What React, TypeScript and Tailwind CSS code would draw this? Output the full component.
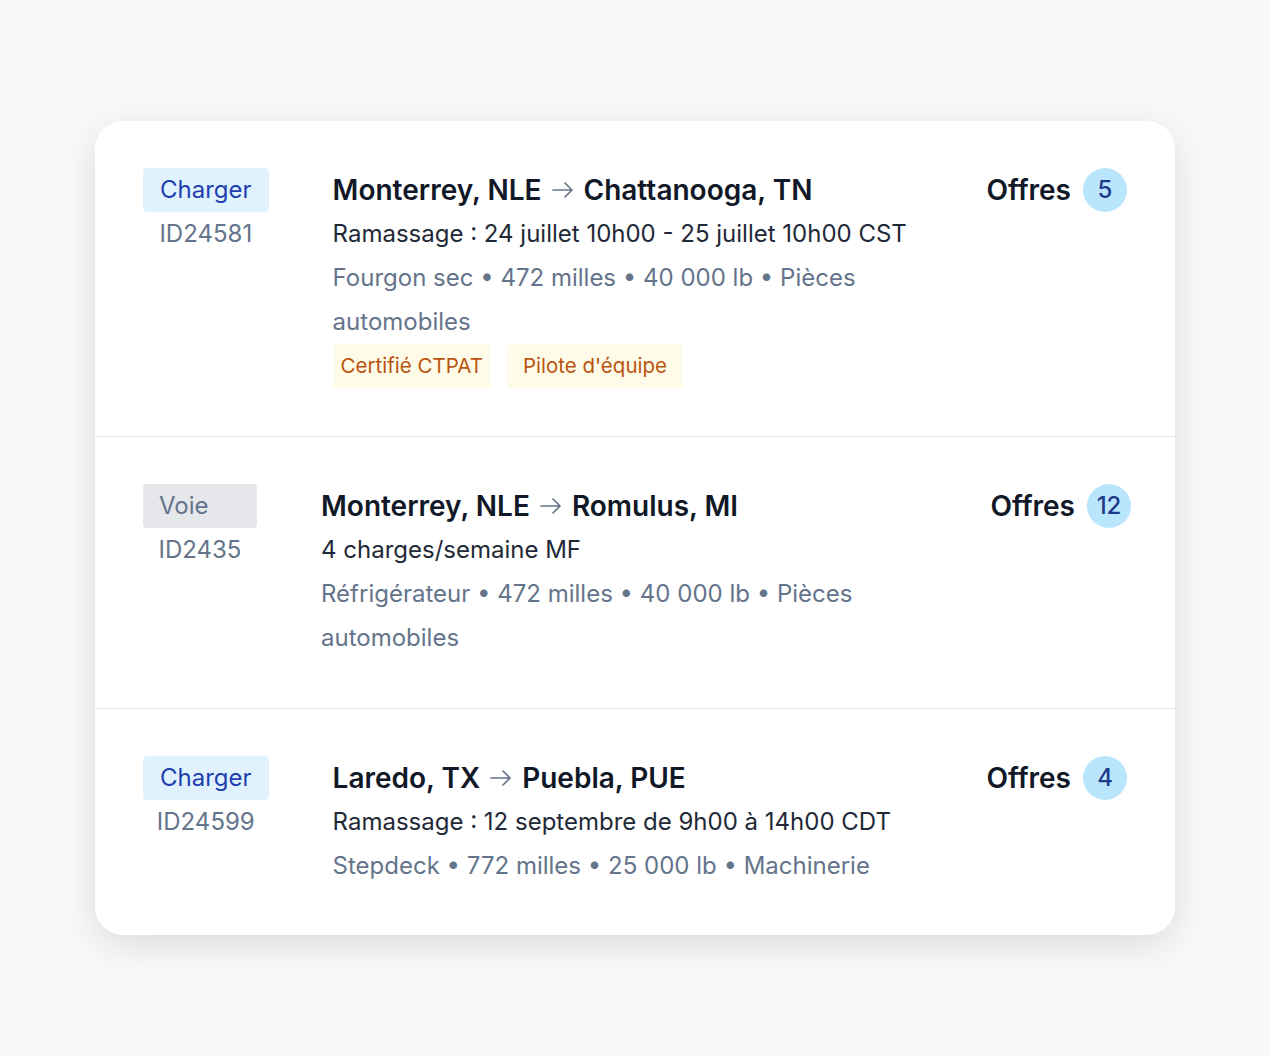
type Tag = { label: string; pad: string };

type Load = {
  kind: "Charger" | "Voie";
  id: string;
  from: string;
  to: string;
  schedule: string;
  meta: string;
  tags?: Tag[];
  offers: number;
  rightPad?: string;
};

const LOADS: Load[] = [
  {
    kind: "Charger",
    id: "ID24581",
    from: "Monterrey, NLE",
    to: "Chattanooga, TN",
    schedule: "Ramassage : 24 juillet 10h00 - 25 juillet 10h00 CST",
    meta: "Fourgon sec • 472 milles • 40 000 lb • Pièces automobiles",
    tags: [
      { label: "Certifié CTPAT", pad: "px-2" },
      { label: "Pilote d'équipe", pad: "px-4" },
    ],
    offers: 5,
  },
  {
    kind: "Voie",
    id: "ID2435",
    from: "Monterrey, NLE",
    to: "Romulus, MI",
    schedule: "4 charges/semaine MF",
    meta: "Réfrigérateur • 472 milles • 40 000 lb • Pièces automobiles",
    offers: 12,
    rightPad: "pr-[44px]",
  },
  {
    kind: "Charger",
    id: "ID24599",
    from: "Laredo, TX",
    to: "Puebla, PUE",
    schedule: "Ramassage : 12 septembre de 9h00 à 14h00 CDT",
    meta: "Stepdeck • 772 milles • 25 000 lb • Machinerie",
    offers: 4,
  },
];

function RouteArrow() {
  return (
    <svg width="22" height="20" viewBox="0 0 22 20" fill="none" className="shrink-0">
      <path
        d="M1 10H20M13 3L20 10L13 17"
        stroke="#64748b"
        strokeWidth="1.7"
        strokeLinecap="round"
        strokeLinejoin="round"
      />
    </svg>
  );
}

function LoadRow({ load, last }: { load: Load; last: boolean }) {
  const isLoad = load.kind === "Charger";
  return (
    <div
      className={`flex items-start pl-12 pt-[47px] ${load.rightPad ?? "pr-12"} ${
        last ? "pb-[47px]" : "border-b border-[#e5e7eb] pb-12"
      }`}
    >
      <div className="flex shrink-0 flex-col items-center">
        <span
          className={`h-11 rounded text-[24px] leading-[44px] ${
            isLoad
              ? "bg-[#e0f2fe] px-[17px] text-[#1e40af]"
              : "w-[114px] bg-[#e5e7eb] px-4 text-[#64748b]"
          }`}
        >
          {load.kind}
        </span>
        <span className="text-[24px] leading-[44px] text-[#64748b]">{load.id}</span>
      </div>

      <div className="ml-16 w-[610px] shrink-0">
        <div className="flex items-center gap-2.5 text-[28px] font-semibold leading-[44px] text-[#111827]">
          <span>{load.from}</span>
          <RouteArrow />
          <span>{load.to}</span>
        </div>
        <p className="text-[24px] leading-[44px] text-[#1f2937]">{load.schedule}</p>
        <p className="text-[24px] leading-[44px] text-[#64748b]">{load.meta}</p>
        {load.tags ? (
          <div className="flex gap-4">
            {load.tags.map((tag) => (
              <span
                key={tag.label}
                className={`h-11 rounded bg-[#fefbe8] text-[20.5px] leading-[44px] text-[#bb540f] ${tag.pad}`}
              >
                {tag.label}
              </span>
            ))}
          </div>
        ) : null}
      </div>

      <div className="ml-auto flex items-center gap-3">
        <span className="text-[28px] font-semibold leading-[44px] text-[#111827]">Offres</span>
        <span className="flex h-11 w-11 items-center justify-center rounded-full bg-[#bae6fd] text-[24px] font-medium text-[#1e3a8a]">
          {load.offers}
        </span>
      </div>
    </div>
  );
}

export default function App() {
  return (
    <div
      className="min-h-screen bg-[#f9f9f9] px-[95px] pt-[121px]"
      style={{ fontFamily: "Inter, 'Noto Sans', sans-serif" }}
    >
      <div className="overflow-hidden rounded-[28px] bg-white shadow-[0_10px_40px_rgba(0,0,0,0.12)]">
        {LOADS.map((load, i) => (
          <LoadRow key={load.id} load={load} last={i === LOADS.length - 1} />
        ))}
      </div>
    </div>
  );
}
